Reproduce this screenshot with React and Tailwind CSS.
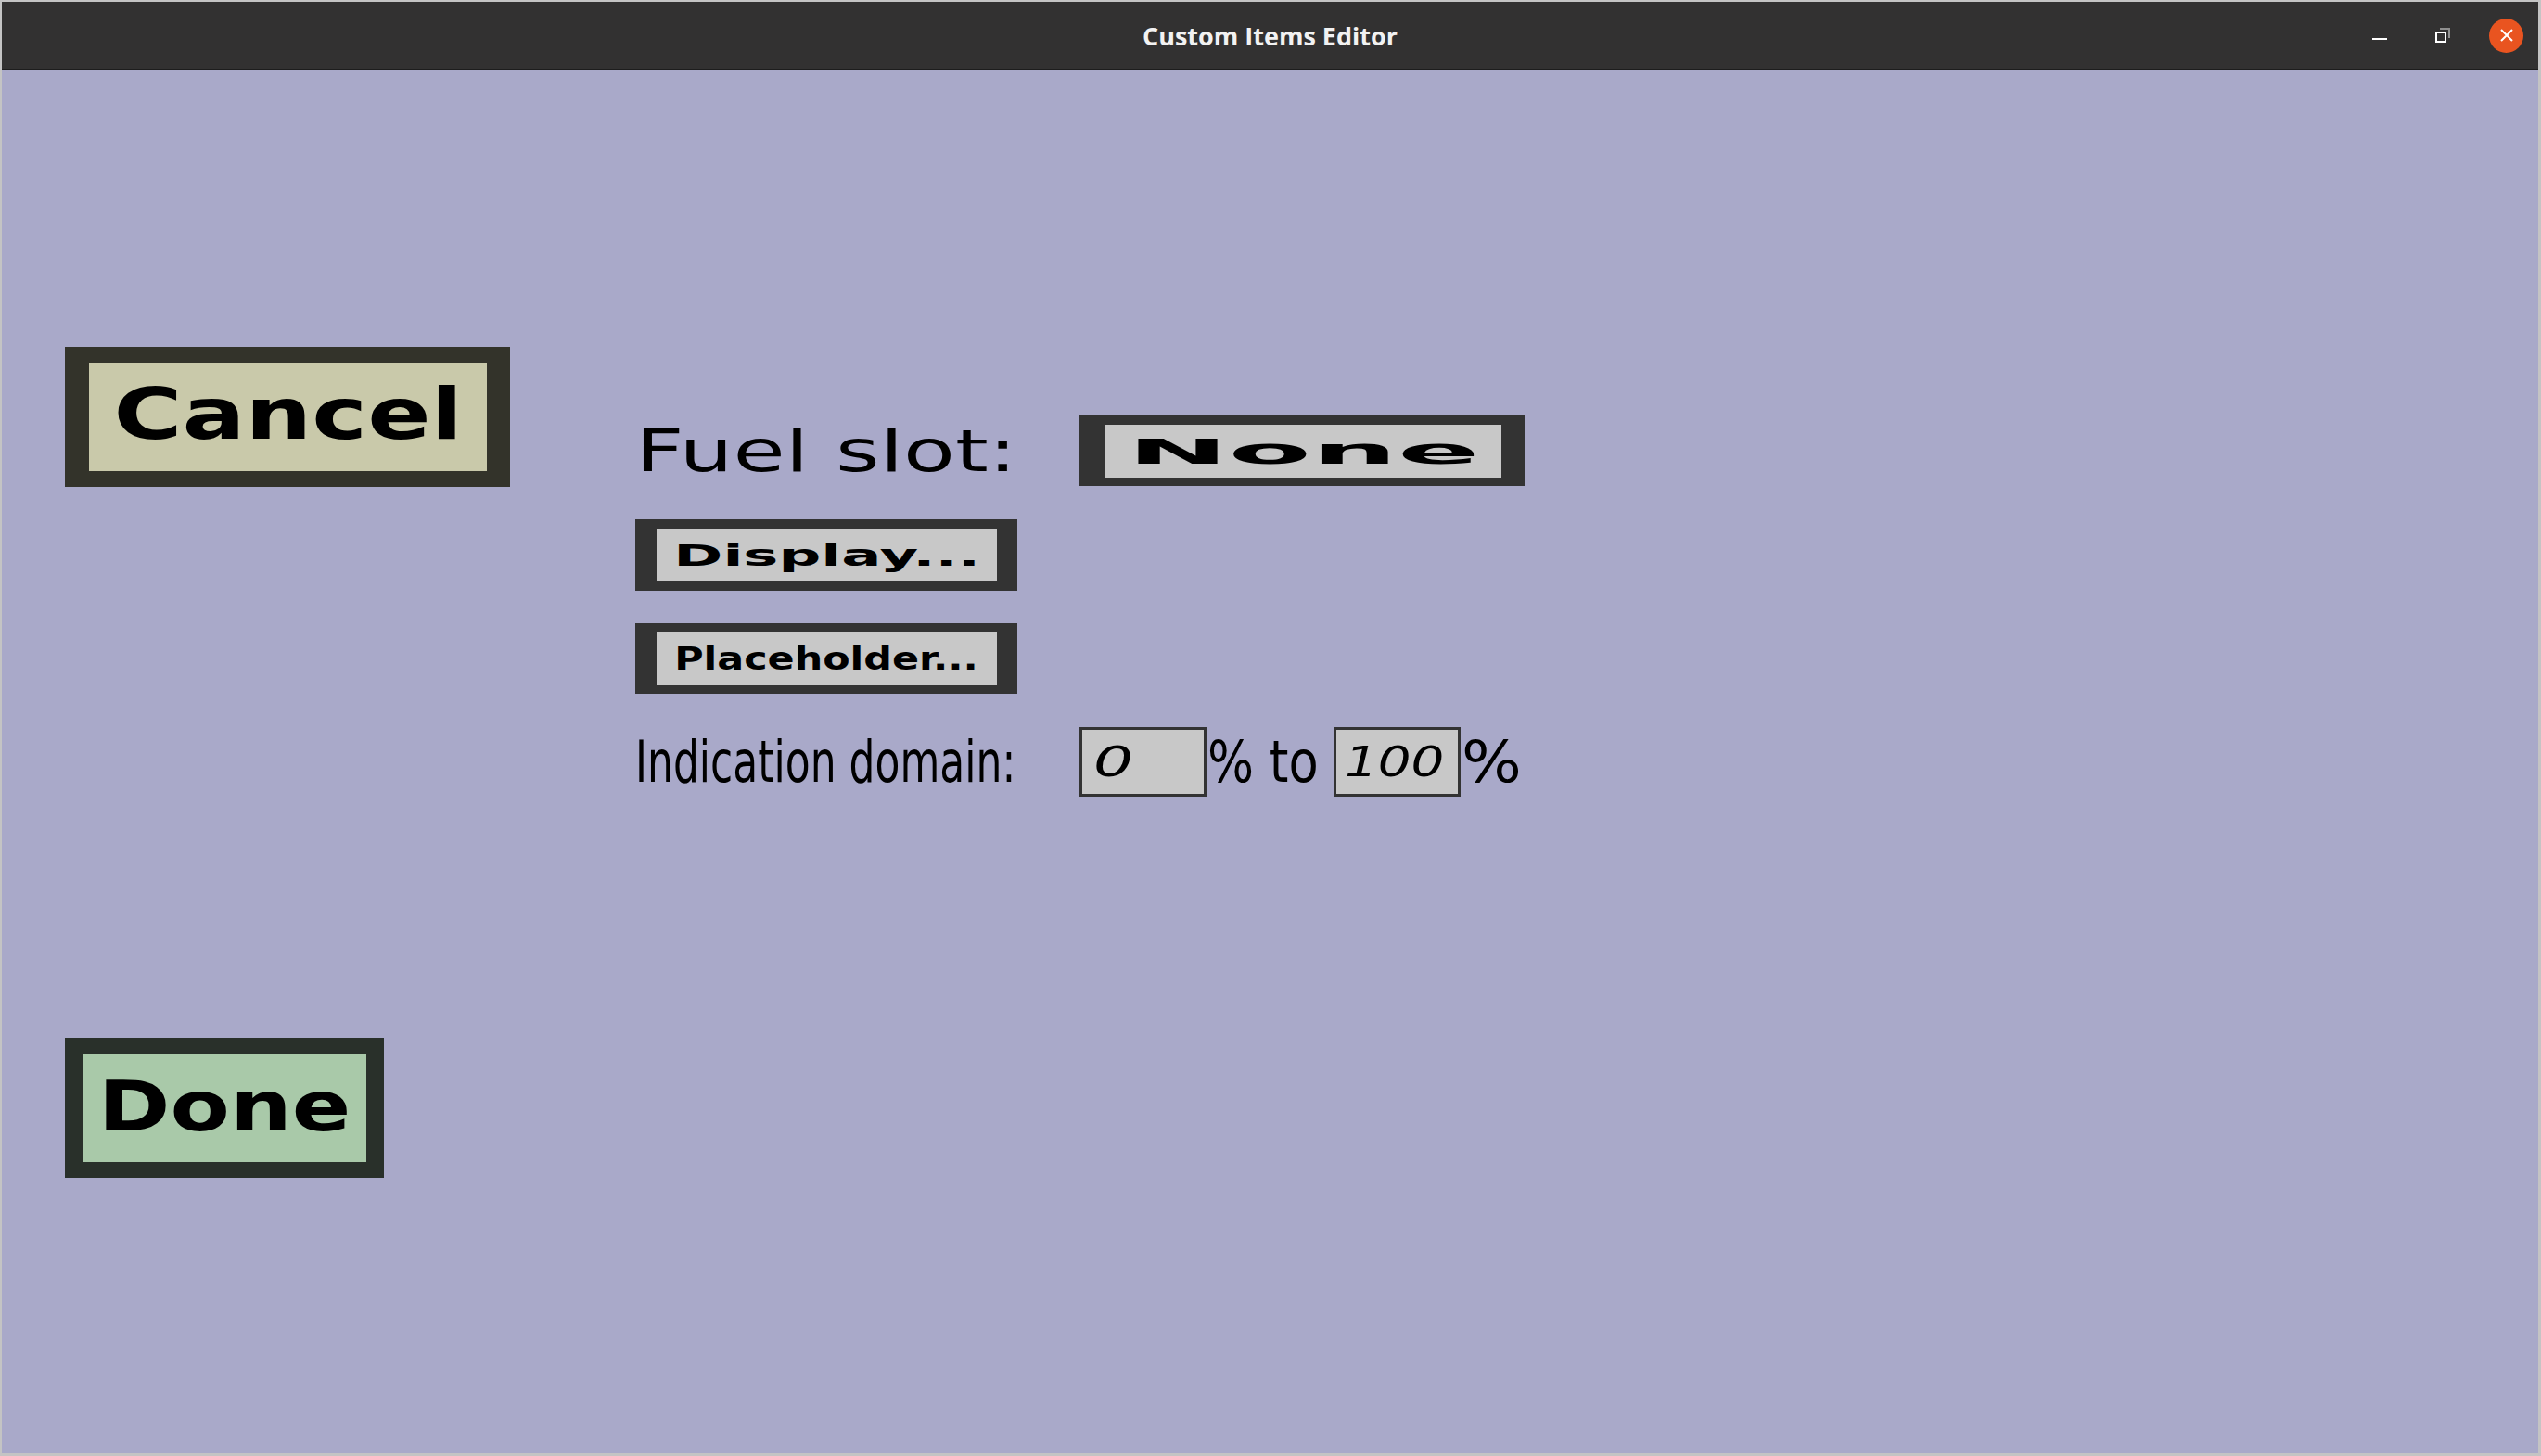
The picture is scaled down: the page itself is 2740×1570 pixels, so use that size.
import React from 'react';

const dejavu = "font-['DejaVu_Sans',sans-serif]";

function Txt({ className, children }) {
    return <span className={`inline-block whitespace-nowrap leading-none text-black ${className}`}>{children}</span>;
}

export default function App() {
    return (
        <div className="w-[2740px] h-[1570px] overflow-hidden bg-[#c4c4c4] pt-[2px] pl-[2px] pr-[3px] pb-[3px] flex flex-col">
            {/* title bar */}
            <div className="relative h-[74px] shrink-0 bg-[#323131] border-b-2 border-[#1d1d1d] flex items-center justify-center">
                <span className="text-[27px] font-bold text-[#f2f2f2] font-['Open_Sans',sans-serif] leading-none">
                    Custom Items Editor
                </span>
                <div className="absolute right-[16px] top-0 h-[72px] flex items-center">
                    <div className="w-[16px] h-[2px] bg-white mt-[7px]"></div>
                    <svg width="16" height="16" viewBox="0 0 16 16" className="ml-[52px]">
                        <path d="M5 1 H15 V11" fill="none" stroke="#8f8f8f" strokeWidth="2" />
                        <rect x="1" y="5" width="10" height="10" fill="none" stroke="#ffffff" strokeWidth="2" />
                    </svg>
                    <div className="ml-[42px] w-[37px] h-[37px] rounded-full bg-[#e95420] flex items-center justify-center">
                        <svg width="14" height="14" viewBox="0 0 14 14">
                            <path d="M1 1 L13 13 M13 1 L1 13" stroke="#ffffff" strokeWidth="2" />
                        </svg>
                    </div>
                </div>
            </div>

            {/* content */}
            <div className={`flex-1 bg-[#a9a9c9] flex ${dejavu}`}>
                {/* left column */}
                <div className="ml-[68px] pt-[298px] flex flex-col items-start">
                    <div className="w-[480px] h-[151px] bg-[#c9c9aa] border-l-[26px] border-r-[25px] border-y-[17px] border-[#33332a] flex items-center justify-center">
                        <Txt className="text-[77px] font-bold scale-x-[1.31] -translate-y-[3px]">Cancel</Txt>
                    </div>
                    <div className="mt-[594px] w-[344px] h-[151px] bg-[#a9c9a9] border-x-[19px] border-y-[17px] border-[#29302a] flex items-center justify-center">
                        <Txt className="text-[75px] font-bold scale-x-[1.25] -translate-y-[1px]">Done</Txt>
                    </div>
                </div>

                {/* middle column */}
                <div className="ml-[135px] pt-[372px] flex flex-col items-start">
                    <div className="h-[76px] flex items-center">
                        <div className="w-[479px]">
                            <Txt className="text-[63px] origin-left scale-x-[1.45]">Fuel slot:</Txt>
                        </div>
                        <div className="w-[480px] h-[76px] bg-[#c8c8c8] border-l-[27px] border-r-[25px] border-t-[10px] border-b-[9px] border-[#333333] flex items-center justify-center">
                            <Txt className="text-[38px] font-bold scale-x-[3.43]">None</Txt>
                        </div>
                    </div>

                    <div className="mt-[36px] w-[412px] h-[77px] bg-[#c8c8c8] border-l-[23px] border-r-[22px] border-y-[10px] border-[#333333] flex items-center justify-center">
                        <Txt className="text-[32px] font-bold scale-x-[2.0]">Display...</Txt>
                    </div>

                    <div className="mt-[35px] w-[412px] h-[76px] bg-[#c8c8c8] border-l-[23px] border-r-[22px] border-y-[9px] border-[#333333] flex items-center justify-center">
                        <Txt className="text-[34px] font-bold scale-x-[1.26]">Placeholder...</Txt>
                    </div>

                    <div className="mt-[36px] h-[75px] flex items-center">
                        <div className="w-[479px]">
                            <Txt className="text-[62px] origin-left scale-x-[0.71]">Indication domain:</Txt>
                        </div>
                        <div className="w-[137px] h-[75px] bg-[#c8c8c8] border-[3px] border-[#333333] flex items-center pl-[12px]">
                            <Txt className="text-[45px] italic origin-left scale-x-[1.5]">0</Txt>
                        </div>
                        <div className="w-[137px] pl-[1px]">
                            <Txt className="text-[62px] origin-left scale-x-[0.85]">% to</Txt>
                        </div>
                        <div className="w-[137px] h-[75px] bg-[#c8c8c8] border-[3px] border-[#333333] flex items-center pl-[9px]">
                            <Txt className="text-[45px] italic origin-left scale-x-[1.25]">100</Txt>
                        </div>
                        <div className="pl-[1px]">
                            <Txt className="text-[62px] origin-left scale-x-[1.1]">%</Txt>
                        </div>
                    </div>
                </div>
            </div>
        </div>
    );
}
